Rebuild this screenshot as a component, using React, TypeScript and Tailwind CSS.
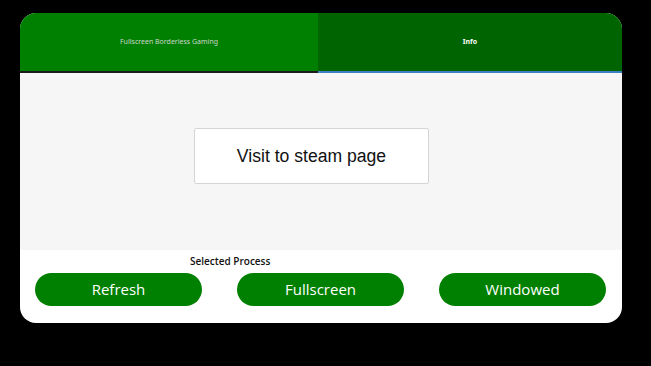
import React from 'react';

export default function App() {
  return (
    <div className="w-[651px] h-[366px] bg-black pt-[13px] pl-[20px]">
      <div className="w-[602px] h-[310px] rounded-[16px] overflow-hidden flex flex-col bg-white">
        {/* Tabs */}
        <div className="flex h-[60px] shrink-0">
          <div className="w-[298px] bg-[#008000] border-b-2 border-[#1c1c1c] flex items-center justify-center">
            <span className="text-[7px] text-[#cfd6cf] font-['Noto_Sans',sans-serif]">
              Fullscreen Borderless Gaming
            </span>
          </div>
          <div className="flex-1 bg-[#006400] border-b-2 border-[#3d7fc0] flex items-center justify-center">
            <span className="text-[7px] text-white font-bold font-['Noto_Sans',sans-serif]">Info</span>
          </div>
        </div>

        {/* Info content */}
        <div className="h-[177px] shrink-0 bg-[#f6f6f6] pt-[55px] pl-[174px]">
          <button className="w-[235px] h-[56px] bg-white border border-[#d4d4d4] rounded-[2px] text-[17.6px] text-[#111] font-['Liberation_Sans',Arial,sans-serif]">
            Visit to steam page
          </button>
        </div>

        {/* Bottom controls */}
        <div className="flex-1 flex flex-col">
          <div className="h-[23px] pt-[4px] pl-[170px] text-[10px] font-semibold text-[#111] font-['Open_Sans',sans-serif] leading-[14px]">
            Selected Process
          </div>
          <div className="flex pl-[15px] gap-[35px]">
            {['Refresh', 'Fullscreen', 'Windowed'].map((label) => (
              <button
                key={label}
                className="w-[167px] h-[33px] rounded-full bg-[#008000] text-white text-[15px] font-['Open_Sans',sans-serif] flex items-center justify-center"
              >
                {label}
              </button>
            ))}
          </div>
        </div>
      </div>
    </div>
  );
}
